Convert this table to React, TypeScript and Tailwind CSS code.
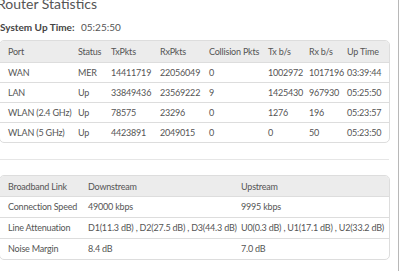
const ports = [
  ["WAN", "MER", "14411719", "22056049", "0", "1002972", "1017196", "03:39:44"],
  ["LAN", "Up", "33849436", "23569222", "9", "1425430", "967930", "05:25:50"],
  ["WLAN (2.4 GHz)", "Up", "78575", "23296", "0", "1276", "196", "05:23:57"],
  ["WLAN (5 GHz)", "Up", "4423891", "2049015", "0", "0", "50", "05:23:50"],
];

const portHeads = ["Port", "Status", "TxPkts", "RxPkts", "Collision Pkts", "Tx b/s", "Rx b/s", "Up Time"];

const links = [
  ["Connection Speed", "49000 kbps", "9995 kbps"],
  ["Line Attenuation", "D1(11.3 dB) , D2(27.5 dB) , D3(44.3 dB)", "U0(0.3 dB) , U1(17.1 dB) , U2(33.2 dB)"],
  ["Noise Margin", "8.4 dB", "7.0 dB"],
];

const portCols = "grid grid-cols-[70px_33px_49px_49px_59px_41px_38px_1fr] items-center pl-[8px]";
const linkCols = "grid grid-cols-[80px_153px_1fr] items-center pl-[8px]";

export default function App() {
  return (
    <div className="w-[400px] h-[274px] overflow-hidden bg-white font-['Lato',sans-serif] text-[9px] tracking-[-0.2px] text-[#555]">
      <div className="w-[399px] h-full border-r border-[#b8b8b8]">
        <h1 className="text-[14px] tracking-normal leading-none text-[#555] -mt-[3px] -ml-[3px] h-[12px] whitespace-nowrap">Router Statistics</h1>
        <div className="flex items-center h-[20px] mt-[8px] text-[10px] tracking-normal whitespace-nowrap">
          <span className="w-[81px] font-bold text-[#444]">System Up Time:</span>
          <span>05:25:50</span>
        </div>

        <div className="mt-[3px] -ml-[1px] w-[391px] border border-[#ddd] rounded-[5px] overflow-hidden">
          <div className={`${portCols} h-[21px] pt-[1px] bg-[#ececec]`}>
            {portHeads.map((h) => (
              <span key={h} className="whitespace-nowrap">{h}</span>
            ))}
          </div>
          {ports.map((row) => (
            <div key={row[0]} className={`${portCols} h-[20px] border-t border-[#ddd]`}>
              {row.map((c, i) => (
                <span key={i} className="whitespace-nowrap">{c}</span>
              ))}
            </div>
          ))}
        </div>

        <div className="mt-[16px] w-[389px] border-t border-[#e6e6e6]" />

        <div className="mt-[15px] -ml-[1px] w-[391px] border border-[#ddd] rounded-[5px] overflow-hidden">
          <div className={`${linkCols} h-[20px] pt-[1px] bg-[#ececec]`}>
            <span>Broadband Link</span>
            <span>Downstream</span>
            <span>Upstream</span>
          </div>
          {links.map((row) => (
            <div key={row[0]} className={`${linkCols} h-[21px] border-t border-[#ddd]`}>
              {row.map((c, i) => (
                <span key={i} className="whitespace-nowrap">{c}</span>
              ))}
            </div>
          ))}
        </div>
      </div>
    </div>
  );
}
